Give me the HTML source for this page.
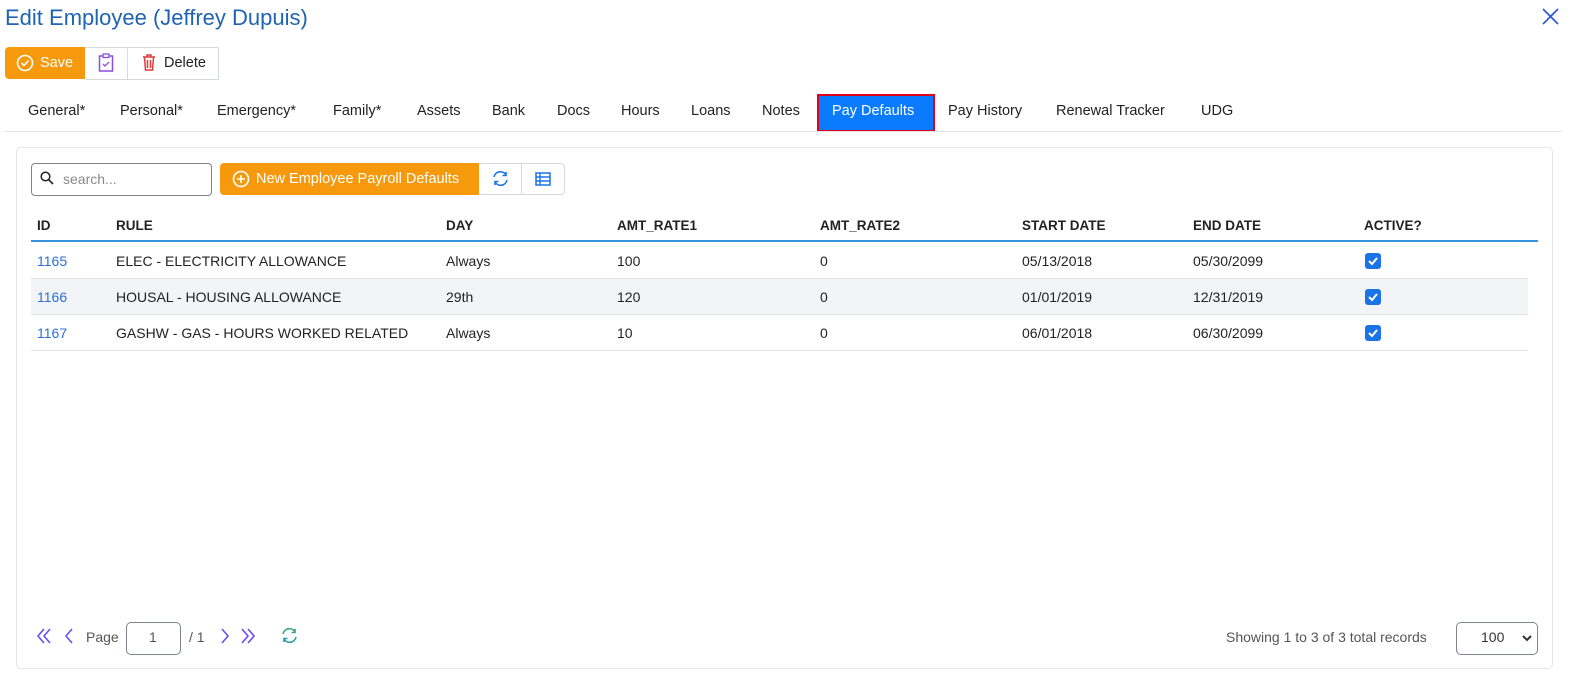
<!DOCTYPE html>
<html><head><meta charset="utf-8"><style>
*{box-sizing:border-box;margin:0;padding:0}
body{width:1580px;height:685px;background:#fff;font-family:"Liberation Sans",sans-serif;color:#111;position:relative;overflow:hidden;font-size:14px}
.a{position:absolute;white-space:nowrap}
.tab{position:absolute;top:103px;font-size:14.5px;color:#222}
.th{position:absolute;top:218px;font-size:13.5px;font-weight:bold;color:#222}
.td{position:absolute;font-size:14px;color:#222}
.lnk{color:#2a6fdb}
.cb{position:absolute;left:1365px;width:16px;height:16px;background:#1a73e8;border-radius:3px}
</style></head><body>
<div class="a" style="left:5px;top:5px;font-size:22px;color:#1f63b3">Edit Employee (Jeffrey Dupuis)</div>
<svg class="a" style="left:1542px;top:8px" width="17" height="17" viewBox="0 0 17 17"><path d="M1 1L16 16M16 1L1 16" stroke="#2b55d8" stroke-width="1.6"/></svg>

<div class="a" style="left:5px;top:47px;width:80px;height:32px;background:#f7990c;border-radius:4px 0 0 4px"></div>
<svg class="a" style="left:16px;top:54px" width="18" height="18" viewBox="0 0 18 18"><circle cx="9" cy="9" r="7.5" fill="none" stroke="#fff" stroke-width="1.6"/><path d="M5.5 9l2.5 2.5 4.5-5" fill="none" stroke="#fff" stroke-width="1.6"/></svg>
<div class="a" style="left:40px;top:55px;font-size:14.5px;color:#fff">Save</div>
<div class="a" style="left:85px;top:47px;width:134px;height:33px;border:1px solid #d6d9de;border-left:none"></div>
<div class="a" style="left:127px;top:47px;width:1px;height:33px;background:#d6d9de"></div>
<svg class="a" style="left:98px;top:53px" width="16" height="19" viewBox="0 0 16 19"><rect x="1.5" y="3" width="13" height="15" fill="none" stroke="#8a4fd8" stroke-width="1.5"/><rect x="5" y="1" width="6" height="3.5" fill="#fff" stroke="#8a4fd8" stroke-width="1.3"/><path d="M5 11l2 2 4-4" fill="none" stroke="#8a4fd8" stroke-width="1.3"/></svg>
<svg class="a" style="left:142px;top:54px" width="14" height="17" viewBox="0 0 14 17"><path d="M1 3h12M5 3V1h4v2M2.5 3.5l1 12.5h7l1-12.5M5.5 6v8M8.5 6v8" fill="none" stroke="#e03a3a" stroke-width="1.5"/></svg>
<div class="a" style="left:164px;top:55px;font-size:14.5px;color:#222">Delete</div>

<div class="tab" style="left:28px">General*</div>
<div class="tab" style="left:120px">Personal*</div>
<div class="tab" style="left:217px">Emergency*</div>
<div class="tab" style="left:333px">Family*</div>
<div class="tab" style="left:417px">Assets</div>
<div class="tab" style="left:492px">Bank</div>
<div class="tab" style="left:557px">Docs</div>
<div class="tab" style="left:621px">Hours</div>
<div class="tab" style="left:691px">Loans</div>
<div class="tab" style="left:762px">Notes</div>
<div class="a" style="left:817px;top:94px;width:118px;height:38px;background:#0a7bff;border:2px solid #e0001b"></div>
<div class="tab" style="left:832px;color:#fff">Pay Defaults</div>
<div class="tab" style="left:948px">Pay History</div>
<div class="tab" style="left:1056px">Renewal Tracker</div>
<div class="tab" style="left:1201px">UDG</div>
<div class="a" style="left:5px;top:131px;width:1557px;height:1px;background:#e2e4e8"></div>

<div class="a" style="left:16px;top:147px;width:1537px;height:522px;border:1px solid #e3e5e8;border-radius:5px"></div>

<div class="a" style="left:31px;top:163px;width:181px;height:33px;border:1px solid #7d8590;border-radius:4px"></div>
<svg class="a" style="left:40px;top:171px" width="14" height="14" viewBox="0 0 14 14"><circle cx="5.5" cy="5.5" r="4.3" fill="none" stroke="#222" stroke-width="1.5"/><path d="M8.7 8.7L13 13" stroke="#222" stroke-width="1.6"/></svg>
<div class="a" style="left:63px;top:171px;font-size:14px;color:#888">search...</div>
<div class="a" style="left:220px;top:163px;width:259px;height:32px;background:#f7990c;border-radius:4px 0 0 4px"></div>
<svg class="a" style="left:232px;top:170px" width="18" height="18" viewBox="0 0 18 18"><circle cx="9" cy="9" r="7.5" fill="none" stroke="#fff" stroke-width="1.6"/><path d="M9 5v8M5 9h8" stroke="#fff" stroke-width="1.6"/></svg>
<div class="a" style="left:256px;top:171px;font-size:14.5px;color:#fff">New Employee Payroll Defaults</div>
<div class="a" style="left:479px;top:163px;width:86px;height:32px;border:1px solid #d6d9de;border-left:none;border-radius:0 4px 4px 0"></div>
<div class="a" style="left:521px;top:163px;width:1px;height:32px;background:#d6d9de"></div>
<svg class="a" style="left:492px;top:170px" width="17" height="17" viewBox="0 0 17 17"><path d="M2 7a6.5 6.5 0 0 1 12-2M14 2v3.5h-3.5M15 10a6.5 6.5 0 0 1-12 2M3 15v-3.5h3.5" fill="none" stroke="#1a73e8" stroke-width="1.6"/></svg>
<svg class="a" style="left:535px;top:172px" width="16" height="14" viewBox="0 0 16 14"><rect x="1" y="1" width="14" height="12" fill="none" stroke="#1a73e8" stroke-width="1.5"/><path d="M1 5h14M1 9h14M5 1v12" stroke="#1a73e8" stroke-width="1.4"/></svg>

<div class="th" style="left:37px">ID</div>
<div class="th" style="left:116px">RULE</div>
<div class="th" style="left:446px">DAY</div>
<div class="th" style="left:617px">AMT_RATE1</div>
<div class="th" style="left:820px">AMT_RATE2</div>
<div class="th" style="left:1022px">START DATE</div>
<div class="th" style="left:1193px">END DATE</div>
<div class="th" style="left:1364px">ACTIVE?</div>
<div class="a" style="left:31px;top:240px;width:1507px;height:2px;background:#3592e0"></div>

<div class="a" style="left:31px;top:278px;width:1497px;height:1px;background:#e2e4e8"></div>
<div class="a" style="left:31px;top:279px;width:1497px;height:35px;background:#f2f4f7"></div>
<div class="a" style="left:31px;top:314px;width:1497px;height:1px;background:#e2e4e8"></div>
<div class="a" style="left:31px;top:350px;width:1497px;height:1px;background:#e2e4e8"></div>

<div class="td lnk" style="left:37px;top:253px">1165</div>
<div class="td" style="left:116px;top:253px">ELEC - ELECTRICITY ALLOWANCE</div>
<div class="td" style="left:446px;top:253px">Always</div>
<div class="td" style="left:617px;top:253px">100</div>
<div class="td" style="left:820px;top:253px">0</div>
<div class="td" style="left:1022px;top:253px">05/13/2018</div>
<div class="td" style="left:1193px;top:253px">05/30/2099</div>
<div class="cb" style="top:253px"></div>

<div class="td lnk" style="left:37px;top:289px">1166</div>
<div class="td" style="left:116px;top:289px">HOUSAL - HOUSING ALLOWANCE</div>
<div class="td" style="left:446px;top:289px">29th</div>
<div class="td" style="left:617px;top:289px">120</div>
<div class="td" style="left:820px;top:289px">0</div>
<div class="td" style="left:1022px;top:289px">01/01/2019</div>
<div class="td" style="left:1193px;top:289px">12/31/2019</div>
<div class="cb" style="top:289px"></div>

<div class="td lnk" style="left:37px;top:325px">1167</div>
<div class="td" style="left:116px;top:325px">GASHW - GAS - HOURS WORKED RELATED</div>
<div class="td" style="left:446px;top:325px">Always</div>
<div class="td" style="left:617px;top:325px">10</div>
<div class="td" style="left:820px;top:325px">0</div>
<div class="td" style="left:1022px;top:325px">06/01/2018</div>
<div class="td" style="left:1193px;top:325px">06/30/2099</div>
<div class="cb" style="top:325px"></div>
<svg class="a" style="left:1365px;top:253px" width="16" height="90" viewBox="0 0 16 90"><path d="M4 8l3 3 5-6M4 44l3 3 5-6M4 80l3 3 5-6" fill="none" stroke="#fff" stroke-width="2"/></svg>

<svg class="a" style="left:36px;top:627px" width="230" height="18" viewBox="0 0 230 18"><g fill="none" stroke="#6a4ef0" stroke-width="1.6"><path d="M8 2L2 9l6 7M14 2L8 9l6 7M36 2L30 9l6 7M186 2l6 7-6 7M206 2l6 7-6 7M212 2l6 7-6 7"/></g></svg>
<div class="a" style="left:86px;top:629px;font-size:14px;color:#555">Page</div>
<div class="a" style="left:126px;top:622px;width:55px;height:33px;border:1px solid #7d8590;border-radius:5px"></div>
<div class="a" style="left:149px;top:629px;font-size:14px;color:#555">1</div>
<div class="a" style="left:189px;top:629px;font-size:14px;color:#555">/ 1</div>
<svg class="a" style="left:281px;top:627px" width="17" height="17" viewBox="0 0 17 17"><path d="M2 7a6.5 6.5 0 0 1 12-2M14 2v3.5h-3.5" fill="none" stroke="#3aa57a" stroke-width="1.6"/><path d="M15 10a6.5 6.5 0 0 1-12 2M3 15v-3.5h3.5" fill="none" stroke="#2a9a9a" stroke-width="1.6"/></svg>
<div class="a" style="left:1226px;top:629px;font-size:14px;color:#555">Showing 1 to 3 of 3 total records</div>
<div class="a" style="left:1456px;top:622px;width:82px;height:33px;border:1px solid #7d8590;border-radius:5px"></div>
<div class="a" style="left:1481px;top:629px;font-size:14px;color:#333">100</div>
<svg class="a" style="left:1522px;top:634px" width="10" height="8" viewBox="0 0 10 8"><path d="M1 2l4 4 4-4" fill="none" stroke="#333" stroke-width="2"/></svg>
</body></html>
